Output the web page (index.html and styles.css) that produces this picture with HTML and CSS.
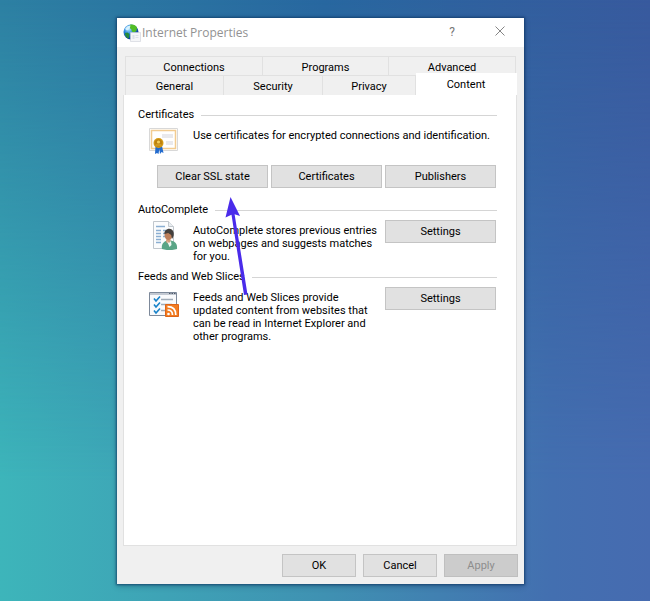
FILE: index.html
```html
<!DOCTYPE html>
<html lang="en">
<head>
<meta charset="utf-8">
<title>Internet Properties</title>
<link rel="stylesheet" href="styles.css">
</head>
<body>
<main class="dialog" role="dialog" aria-labelledby="dialog-title">
  <header class="titlebar">
    <svg class="title-icon" viewBox="0 0 18 18" aria-hidden="true">
      <defs>
        <radialGradient id="globe" cx="35%" cy="30%" r="75%">
          <stop offset="0" stop-color="#b5e6ff"/><stop offset=".45" stop-color="#2683dc"/><stop offset="1" stop-color="#082a83"/>
        </radialGradient>
      </defs>
      <circle cx="8" cy="8" r="7.5" fill="url(#globe)"/>
      <path d="M7 .8c3-.7 5.300.2 7 2.600l-.6 3.600-2.400 1.500-2-1-.8-2.500-2-1z" fill="#52bd25"/>
      <path d="M2 9l2.500-.4 2 1.500-.6 3.600-1.100.7L2.500 12z" fill="#278c38"/>
      <path d="M2 5C3.500 2.500 5.500 1.500 7.500 1.500L6.500 5 4 6.500z" fill="#d5f2ff"/>
      <path d="M7.500 8.500h10v9h-10z" fill="#f5f6f8" stroke="#ccd0d8" stroke-width=".6"/>
      <path d="M9.500 11h2v4h-2zm3 0h3v1h-3zm0 2h3v1h-3z" fill="#dce1e9"/>
    </svg>
    <h1 class="title" id="dialog-title">Internet Properties</h1>
    <button class="window-button" type="button" aria-label="Help">?</button>
    <button class="window-button" type="button" aria-label="Close">
      <svg class="close-icon" viewBox="0 0 10 10" aria-hidden="true"><path d="M.5.5l9 9M9.500.5l-9 9" stroke="#858585" fill="none"/></svg>
    </button>
  </header>
  <div class="tabs" role="tablist">
    <div class="tab-row tab-row-back">
      <button class="tab" type="button" role="tab">Connections</button>
      <button class="tab" type="button" role="tab">Programs</button>
      <button class="tab" type="button" role="tab">Advanced</button>
    </div>
    <div class="tab-row tab-row-front">
      <button class="tab" type="button" role="tab">General</button>
      <button class="tab" type="button" role="tab">Security</button>
      <button class="tab" type="button" role="tab">Privacy</button>
      <button class="tab tab-active" type="button" role="tab" aria-selected="true">Content</button>
    </div>
  </div>
  <div class="panel" role="tabpanel">
    <section class="group group-certificates">
      <h2 class="legend">Certificates</h2>
      <div class="group-body">
        <svg class="icon" viewBox="0 0 30 30" aria-hidden="true">
          <path d="M.5 3.500h28v22H.5z" fill="#fff" stroke="#d8d8d8"/>
          <path d="M2.500 5.500h24v18h-24z" fill="#fff" stroke="#f2cc91" stroke-width="1.500"/>
          <path d="M13 9h11v4H13zm4 7h7v4h-7z" fill="#e9e9ed"/>
          <path d="M6.500 21l-.5 8 2-1 1.500 1 1-6zM10 22l1 7 1.500-2 2 1-1.500-7z" fill="#236bce"/>
          <circle cx="9.500" cy="18" r="5" fill="#d69b15"/>
          <circle cx="9.500" cy="18" r="3.800" fill="#bd8210"/>
          <circle cx="9.500" cy="17" r="1.600" fill="#f3cd59"/>
          <path d="M6.500 20h6" stroke="#e2af31"/>
        </svg>
        <p class="text text-wide">Use certificates for encrypted connections and identification.</p>
      </div>
      <div class="button-row">
        <button class="button" type="button">Clear SSL state</button>
        <button class="button" type="button">Certificates</button>
        <button class="button" type="button">Publishers</button>
      </div>
    </section>
    <section class="group">
      <h2 class="legend">AutoComplete</h2>
      <div class="group-body">
        <svg class="icon" viewBox="0 0 30 30" aria-hidden="true">
          <path d="M4.500 1.500h15l5 5v22h-20z" fill="#fbfcfd" stroke="#c1c7cd"/>
          <path d="M19.500 1.500v5h5" fill="#e9edf0" stroke="#c1c7cd"/>
          <path d="M7 6.500h9M7 10.500h5m2 0h6M7 13.500h5m2 0h4M7 16.500h5m2 0h3M7 19.500h5M7 22.500h5" stroke="#8aaed2" stroke-width="1.500"/>
          <path d="M13 29c-1-5 2-7.500 5-8.500h4c4 1 6.500 3 6 8.500-4 1.500-11 1.500-15 0z" fill="#5aa586"/>
          <path d="M17.500 18h4v4l-2 2-2.500-2z" fill="#d49c79"/>
          <path d="M18 21l2 2 2-2 .5 4-2 2z" fill="#eff8f3"/>
          <ellipse cx="19.500" cy="15" rx="4" ry="5" fill="#bd7f5b"/>
          <path d="M15.500 14c-1-5 7-8 9-2 .6 2 .3 5-1.500 7l-.8-4-3-2z" fill="#44403d"/>
        </svg>
        <p class="text">AutoComplete stores previous entries on webpages and suggests matches for you.</p>
        <button class="button" type="button">Settings</button>
      </div>
    </section>
    <section class="group">
      <h2 class="legend">Feeds and Web Slices</h2>
      <div class="group-body">
        <svg class="icon" viewBox="0 0 30 30" aria-hidden="true">
          <path d="M.5 5.500h27v23H.5z" fill="#f9fafc" stroke="#7d899a"/>
          <path d="M1 7h26" stroke="#c3c9d2" stroke-width="2"/>
          <path d="M20 6.500h1.500m1 0H24m1 0h1.500" stroke="#4e5968"/>
          <path d="M12 12.500h12M12 17.500h11M12 23.500h4" stroke="#a0abb7" stroke-width="1.500"/>
          <path d="M5 11.500l2 2.500 4-4.500M5 17.500l2 2.500 4-4.500M5 23.500l2 2.500 4-4.500" stroke="#1782c9" stroke-width="1.600" fill="none"/>
          <path d="M16.500 17.500h13v12h-13z" fill="#f27b20" stroke="#de6417"/>
          <circle cx="19.500" cy="27" r="1.300" fill="#fff"/>
          <path d="M18.500 23q5 0 5 5M18.500 19.700q8.300 0 8.300 8.300" stroke="#fff" stroke-width="1.700" fill="none"/>
        </svg>
        <p class="text">Feeds and Web Slices provide updated content from websites that can be read in Internet Explorer and other programs.</p>
        <button class="button" type="button">Settings</button>
      </div>
    </section>
  </div>
  <footer class="footer">
    <button class="button" type="button">OK</button>
    <button class="button" type="button">Cancel</button>
    <button class="button" type="button" disabled>Apply</button>
  </footer>
  <svg class="arrow" viewBox="0 0 24 100" aria-hidden="true">
    <path d="M6.500 0L16 19 10.600 17.200 23.500 97.500 20 98 7.500 17.800 1.500 20.500z" fill="#4a2bea"/>
  </svg>
</main>
</body>
</html>
```
FILE: styles.css
```css
* { box-sizing: border-box; }

body {
  position: relative;
  margin: 0;
  min-height: 100vh;
  display: flex;
  padding: 18px 126px 17px 117px;
  font: 11px/13px Roboto, "Noto Sans", sans-serif;
  color: #000;
  background: linear-gradient(90deg, #2d80a3, #2867a0 50%, #385a9e);
}

body::before {
  content: "";
  position: absolute;
  inset: 0;
  background: linear-gradient(90deg, #3db5ba, #3f91b2 50%, #436fb0 85%, #466bb0);
  mask-image: linear-gradient(transparent, #000 80%);
}

h1, h2, p { margin: 0; font: inherit; }
button { font: inherit; color: inherit; padding: 0; }

.dialog {
  position: relative;
  flex: 1;
  display: flex;
  flex-direction: column;
  background: #f0f0f0;
  box-shadow: 0 0 2px 1px rgba(10, 50, 95, .65), 0 2px 6px rgba(0, 25, 60, .3);
}

.titlebar {
  display: flex;
  align-items: center;
  height: 29px;
  padding-left: 6px;
  background: #fff;
}

.title-icon { width: 18px; height: 18px; margin-right: 1px; }
.title { flex: 1; padding-top: 1px; font: 12px/14px "Open Sans", sans-serif; color: #929292; }

.window-button {
  width: 48px;
  height: 29px;
  border: 0;
  background: none;
  font-size: 12px;
  color: #777;
}

.close-icon { width: 10px; height: 10px; }

.tabs { padding: 9px 7px 0 8px; }
.tab-row { display: grid; }
.tab-row-back { grid-template-columns: 138fr 126fr 127fr; margin-right: 1px; }
.tab-row-front { grid-template-columns: 99fr 99fr 93fr 101fr; align-items: end; }

.tab {
  height: 20px;
  border: solid #e1e1e1;
  border-width: 1px 1px 0 0;
  background: #f0f0f0;
  padding-top: 2px;
}

.tab:first-child { border-left-width: 1px; }
.tab-row-back .tab { height: 19px; }

.tab-active {
  height: 22px;
  margin-top: -2px;
  background: #fff;
  border-color: #fff;
  padding-top: 0;
}

.panel {
  flex: 1;
  margin: 0 7px 0 6px;
  padding: 13px 19px 0 14px;
  background: #fff;
  border: solid #e1e1e1;
  border-width: 0 1px 1px;
}

.group { min-height: 67px; }
.group-certificates { min-height: 95px; }

.legend {
  display: flex;
  align-items: center;
  gap: 7px;
  line-height: 14px;
}

.legend::after {
  content: "";
  flex: 1;
  border-top: 1px solid #d5d5d5;
}

.group-body {
  display: grid;
  grid-template-columns: 30px 1fr 111px;
  column-gap: 14px;
  align-items: start;
  padding: 3px 1px 0 11px;
}

.icon { width: 30px; height: 30px; }
.text { padding-top: 4px; margin-right: -8px; }
.text-wide { grid-column: span 2; }

.button {
  height: 23px;
  border: 1px solid #c4c4c4;
  background: #e1e1e1;
}

.button:disabled { background: #ccc; border-color: #bfbfbf; color: #8d8d8d; }

.button-row {
  display: grid;
  grid-template-columns: repeat(3, 1fr);
  gap: 3px;
  padding: 10px 1px 0 19px;
}

.footer {
  display: flex;
  justify-content: flex-end;
  gap: 7px;
  padding: 8px 6px 7px;
}

.footer .button { width: 74px; }

.arrow {
  position: absolute;
  left: 107px;
  top: 179px;
  width: 24px;
  height: 100px;
}
```
